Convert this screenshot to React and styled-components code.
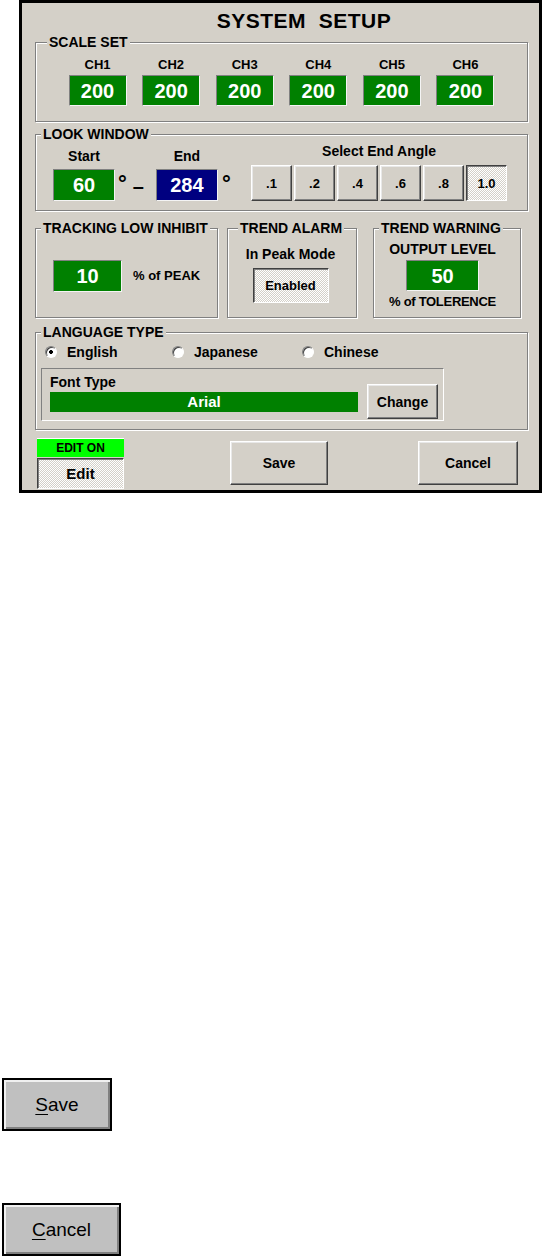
import styled, { createGlobalStyle } from "styled-components";

const GlobalStyle = createGlobalStyle`
  html, body {
    margin: 0;
    padding: 0;
    background: #fff;
  }
  body {
    font-family: "Liberation Sans", Arial, sans-serif;
    color: #000;
  }
`;

const face = "#d4d0c8";

const Page = styled.div`
  width: 542px;
  height: 1258px;
  display: flex;
  flex-direction: column;
  align-items: flex-start;
`;

const Panel = styled.div`
  box-sizing: border-box;
  margin-left: 19px;
  width: 523px;
  height: 493px;
  border: 3px solid #000;
  background: ${face};
  padding: 0 11px 0 13px;
  display: flex;
  flex-direction: column;
`;

const Title = styled.h1`
  margin: 6px 0 0;
  padding-left: 45px;
  font: bold 21px/24px "Liberation Sans", Arial, sans-serif;
  letter-spacing: 0.5px;
  text-align: center;
  white-space: pre;
`;

const Group = styled.fieldset`
  box-sizing: border-box;
  margin: ${(p) => p.$top || 0}px 0 0 ${(p) => p.$left || 0}px;
  padding: 0;
  min-width: 0;
  width: ${(p) => (p.$w ? `${p.$w}px` : "auto")};
  height: ${(p) => p.$h}px;
  border: 1px solid #808080;
  box-shadow: inset 1px 1px 0 #fff, 1px 1px 0 #fff;
  flex-shrink: 0;
`;

const Legend = styled.legend`
  margin-left: ${(p) => p.$indent ?? 5}px;
  padding: 0 2px;
  font: bold 14px/16px "Liberation Sans", Arial, sans-serif;
  background: ${face};
  white-space: nowrap;
`;

const Label = styled.div`
  font: bold ${(p) => p.$size || 14}px/16px "Liberation Sans", Arial, sans-serif;
  letter-spacing: ${(p) => p.$ls || 0}px;
  white-space: nowrap;
`;

const ValueBox = styled.div`
  box-sizing: border-box;
  width: ${(p) => p.$w}px;
  height: ${(p) => p.$h}px;
  background: ${(p) => (p.$blue ? "#000080" : "#008000")};
  border: 1px solid;
  border-color: #808080 #f4f4f4 #f4f4f4 #808080;
  color: #fff;
  font: bold 20px/1 "Liberation Sans", Arial, sans-serif;
  display: flex;
  align-items: center;
  justify-content: center;
  flex-shrink: 0;
`;

const Button = styled.button`
  box-sizing: border-box;
  width: ${(p) => p.$w}px;
  height: ${(p) => p.$h}px;
  margin: 0;
  padding: 0;
  font: bold ${(p) => p.$size || 14}px/1 "Liberation Sans", Arial, sans-serif;
  color: #000;
  border: 1px solid;
  flex-shrink: 0;
  ${(p) =>
    p.$pressed
      ? `
    border-color: #404040 #fff #fff #404040;
    box-shadow: inset 1px 1px 0 #808080;
    background: repeating-conic-gradient(#fff 0 25%, ${face} 0 50%) 0 0 / 2px 2px;
  `
      : `
    border-color: #fff #404040 #404040 #fff;
    box-shadow: inset -1px -1px 0 #808080, inset 1px 1px 0 #e8e8e8;
    background: ${face};
  `}
`;

/* scale set */
const ScaleRow = styled.div`
  display: flex;
  justify-content: center;
  gap: 15.6px;
  padding-top: 7px;
`;

const ChannelCol = styled.div`
  display: flex;
  flex-direction: column;
  align-items: center;
  gap: 2px;
`;

/* look window */
const LookRow = styled.div`
  display: flex;
  align-items: flex-end;
  justify-content: space-between;
  padding: 1px 20px 0 17px;
`;

const LookLeft = styled.div`
  display: flex;
  align-items: flex-end;
`;

const FieldCol = styled.div`
  display: flex;
  flex-direction: column;
  align-items: center;
  gap: 5px;
`;

const Degree = styled.span`
  align-self: flex-end;
  height: 32px;
  margin-left: ${(p) => p.$ml}px;
  font: bold 22px/22px "Liberation Sans", Arial, sans-serif;
  padding-top: 4px;
  box-sizing: border-box;
`;

const Dash = styled.span`
  align-self: flex-end;
  height: 32px;
  margin: 0 12px 0 6px;
  display: flex;
  align-items: center;
  padding-top: 2px;
  box-sizing: border-box;
  font: bold 20px/1 "Liberation Sans", Arial, sans-serif;
`;

const AngleCol = styled.div`
  display: flex;
  flex-direction: column;
  align-items: center;
  gap: 6px;
`;

const AngleRow = styled.div`
  display: flex;
  gap: 2px;
`;

/* middle row */
const MidRow = styled.div`
  display: flex;
  margin-top: 9px;
`;

const TrackingBody = styled.div`
  display: flex;
  align-items: center;
  gap: 11px;
  padding: 24px 0 0 17px;
`;

const CenterCol = styled.div`
  display: flex;
  flex-direction: column;
  align-items: center;
  gap: ${(p) => p.$gap}px;
  padding: ${(p) => p.$pt}px ${(p) => p.$pr || 0}px 0 0;
`;

/* language */
const RadioRow = styled.div`
  display: grid;
  grid-template-columns: 127px 130px auto;
  padding: 4px 0 0 9px;
`;

const RadioItem = styled.label`
  display: flex;
  align-items: center;
  gap: 10px;
  font: bold 14px/16px "Liberation Sans", Arial, sans-serif;
`;

const RadioDot = styled.span`
  box-sizing: border-box;
  width: 12px;
  height: 12px;
  border-radius: 50%;
  border: 1px solid;
  border-color: #808080 #fff #fff #808080;
  box-shadow: inset 1px 1px 0 #404040;
  background: ${(p) =>
    p.$on ? "radial-gradient(circle, #000 0 1.6px, #fff 2.2px)" : "#fff"};
`;

const FontBox = styled.div`
  box-sizing: border-box;
  display: flex;
  align-items: flex-start;
  width: 403px;
  height: 53px;
  margin: 8px 0 0 5px;
  padding: 5px 0 0 8px;
  border: 1px solid;
  border-color: #808080 #fff #fff #808080;
`;

const FontCol = styled.div`
  display: flex;
  flex-direction: column;
  gap: 2px;
`;

const FontBar = styled.div`
  width: 308px;
  height: 20px;
  background: #008000;
  color: #fff;
  font: bold 15px/20px "Liberation Sans", Arial, sans-serif;
  text-align: center;
`;

const ChangeWrap = styled.div`
  margin: 10px 0 0 9px;
`;

/* bottom */
const BottomRow = styled.div`
  display: flex;
  align-items: flex-start;
  margin-top: 8px;
`;

const EditCol = styled.div`
  display: flex;
  flex-direction: column;
  gap: 1px;
  margin-left: 2px;
  width: 87px;
`;

const EditOn = styled.div`
  height: 19px;
  background: #00ff00;
  border-top: 1px solid #fff;
  box-sizing: border-box;
  font: bold 12px/18px "Liberation Sans", Arial, sans-serif;
  text-align: center;
`;

const Spaced = styled.div`
  margin: ${(p) => p.$mt || 0}px 0 0 ${(p) => p.$ml}px;
`;

/* standalone buttons below */
const ClassicButton = styled.button`
  box-sizing: border-box;
  width: ${(p) => p.$w}px;
  height: 53px;
  margin: ${(p) => p.$mt}px 0 0 2px;
  padding: 0;
  background: #c0c0c0;
  border: 2px solid #000;
  box-shadow: inset 2px 2px 0 #f0f0f0, inset -2px -2px 0 #808080;
  font: 19px/1 "Liberation Sans", Arial, sans-serif;
  color: #000;
  u {
    text-underline-offset: 3px;
  }
`;

const channels = ["CH1", "CH2", "CH3", "CH4", "CH5", "CH6"];
const angles = [".1", ".2", ".4", ".6", ".8", "1.0"];

export default function App() {
  return (
    <Page>
      <GlobalStyle />
      <Panel>
        <Title>{"SYSTEM  SETUP"}</Title>

        <Group $top={1} $h={88}>
          <Legend $indent={11}>SCALE SET</Legend>
          <ScaleRow>
            {channels.map((ch) => (
              <ChannelCol key={ch}>
                <Label $size={13}>{ch}</Label>
                <ValueBox $w={58} $h={31}>
                  200
                </ValueBox>
              </ChannelCol>
            ))}
          </ScaleRow>
        </Group>

        <Group $top={4} $h={85}>
          <Legend>LOOK WINDOW</Legend>
          <LookRow>
            <LookLeft>
              <FieldCol>
                <Label>Start</Label>
                <ValueBox $w={62} $h={32}>
                  60
                </ValueBox>
              </FieldCol>
              <Degree $ml={3}>°</Degree>
              <Dash>–</Dash>
              <FieldCol>
                <Label>End</Label>
                <ValueBox $w={62} $h={32} $blue>
                  284
                </ValueBox>
              </FieldCol>
              <Degree $ml={4}>°</Degree>
            </LookLeft>
            <AngleCol>
              <Label>Select End Angle</Label>
              <AngleRow>
                {angles.map((a) => (
                  <Button key={a} $w={41} $h={36} $size={13} $pressed={a === "1.0"}>
                    {a}
                  </Button>
                ))}
              </AngleRow>
            </AngleCol>
          </LookRow>
        </Group>

        <MidRow>
          <Group $w={183} $h={98}>
            <Legend $indent={5}>TRACKING LOW INHIBIT</Legend>
            <TrackingBody>
              <ValueBox $w={69} $h={32}>
                10
              </ValueBox>
              <Label $size={13}>% of PEAK</Label>
            </TrackingBody>
          </Group>
          <Group $w={130} $h={98} $left={9}>
            <Legend $indent={10}>TREND ALARM</Legend>
            <CenterCol $gap={6} $pt={10} $pr={3}>
              <Label>In Peak Mode</Label>
              <Button $w={76} $h={35} $size={13} $pressed>
                Enabled
              </Button>
            </CenterCol>
          </Group>
          <Group $w={148} $h={98} $left={16}>
            <Legend $indent={5}>TREND WARNING</Legend>
            <CenterCol $gap={3} $pt={5} $pr={9}>
              <Label>OUTPUT LEVEL</Label>
              <ValueBox $w={73} $h={31}>
                50
              </ValueBox>
              <Label $size={13} $ls={-0.3}>
                % of TOLERENCE
              </Label>
            </CenterCol>
          </Group>
        </MidRow>

        <Group $top={6} $h={106}>
          <Legend>LANGUAGE TYPE</Legend>
          <RadioRow>
            <RadioItem>
              <RadioDot $on />
              English
            </RadioItem>
            <RadioItem>
              <RadioDot />
              Japanese
            </RadioItem>
            <RadioItem>
              <RadioDot />
              Chinese
            </RadioItem>
          </RadioRow>
          <FontBox>
            <FontCol>
              <Label>Font Type</Label>
              <FontBar>Arial</FontBar>
            </FontCol>
            <ChangeWrap>
              <Button $w={71} $h={35}>
                Change
              </Button>
            </ChangeWrap>
          </FontBox>
        </Group>

        <BottomRow>
          <EditCol>
            <EditOn>EDIT ON</EditOn>
            <Button $w={87} $h={31} $size={15} $pressed>
              Edit
            </Button>
          </EditCol>
          <Spaced $ml={106} $mt={3}>
            <Button $w={98} $h={44}>
              Save
            </Button>
          </Spaced>
          <Spaced $ml={90} $mt={3}>
            <Button $w={100} $h={44}>
              Cancel
            </Button>
          </Spaced>
        </BottomRow>
      </Panel>

      <ClassicButton $w={110} $mt={585}>
        <u>S</u>ave
      </ClassicButton>
      <ClassicButton $w={119} $mt={72}>
        <u>C</u>ancel
      </ClassicButton>
    </Page>
  );
}
